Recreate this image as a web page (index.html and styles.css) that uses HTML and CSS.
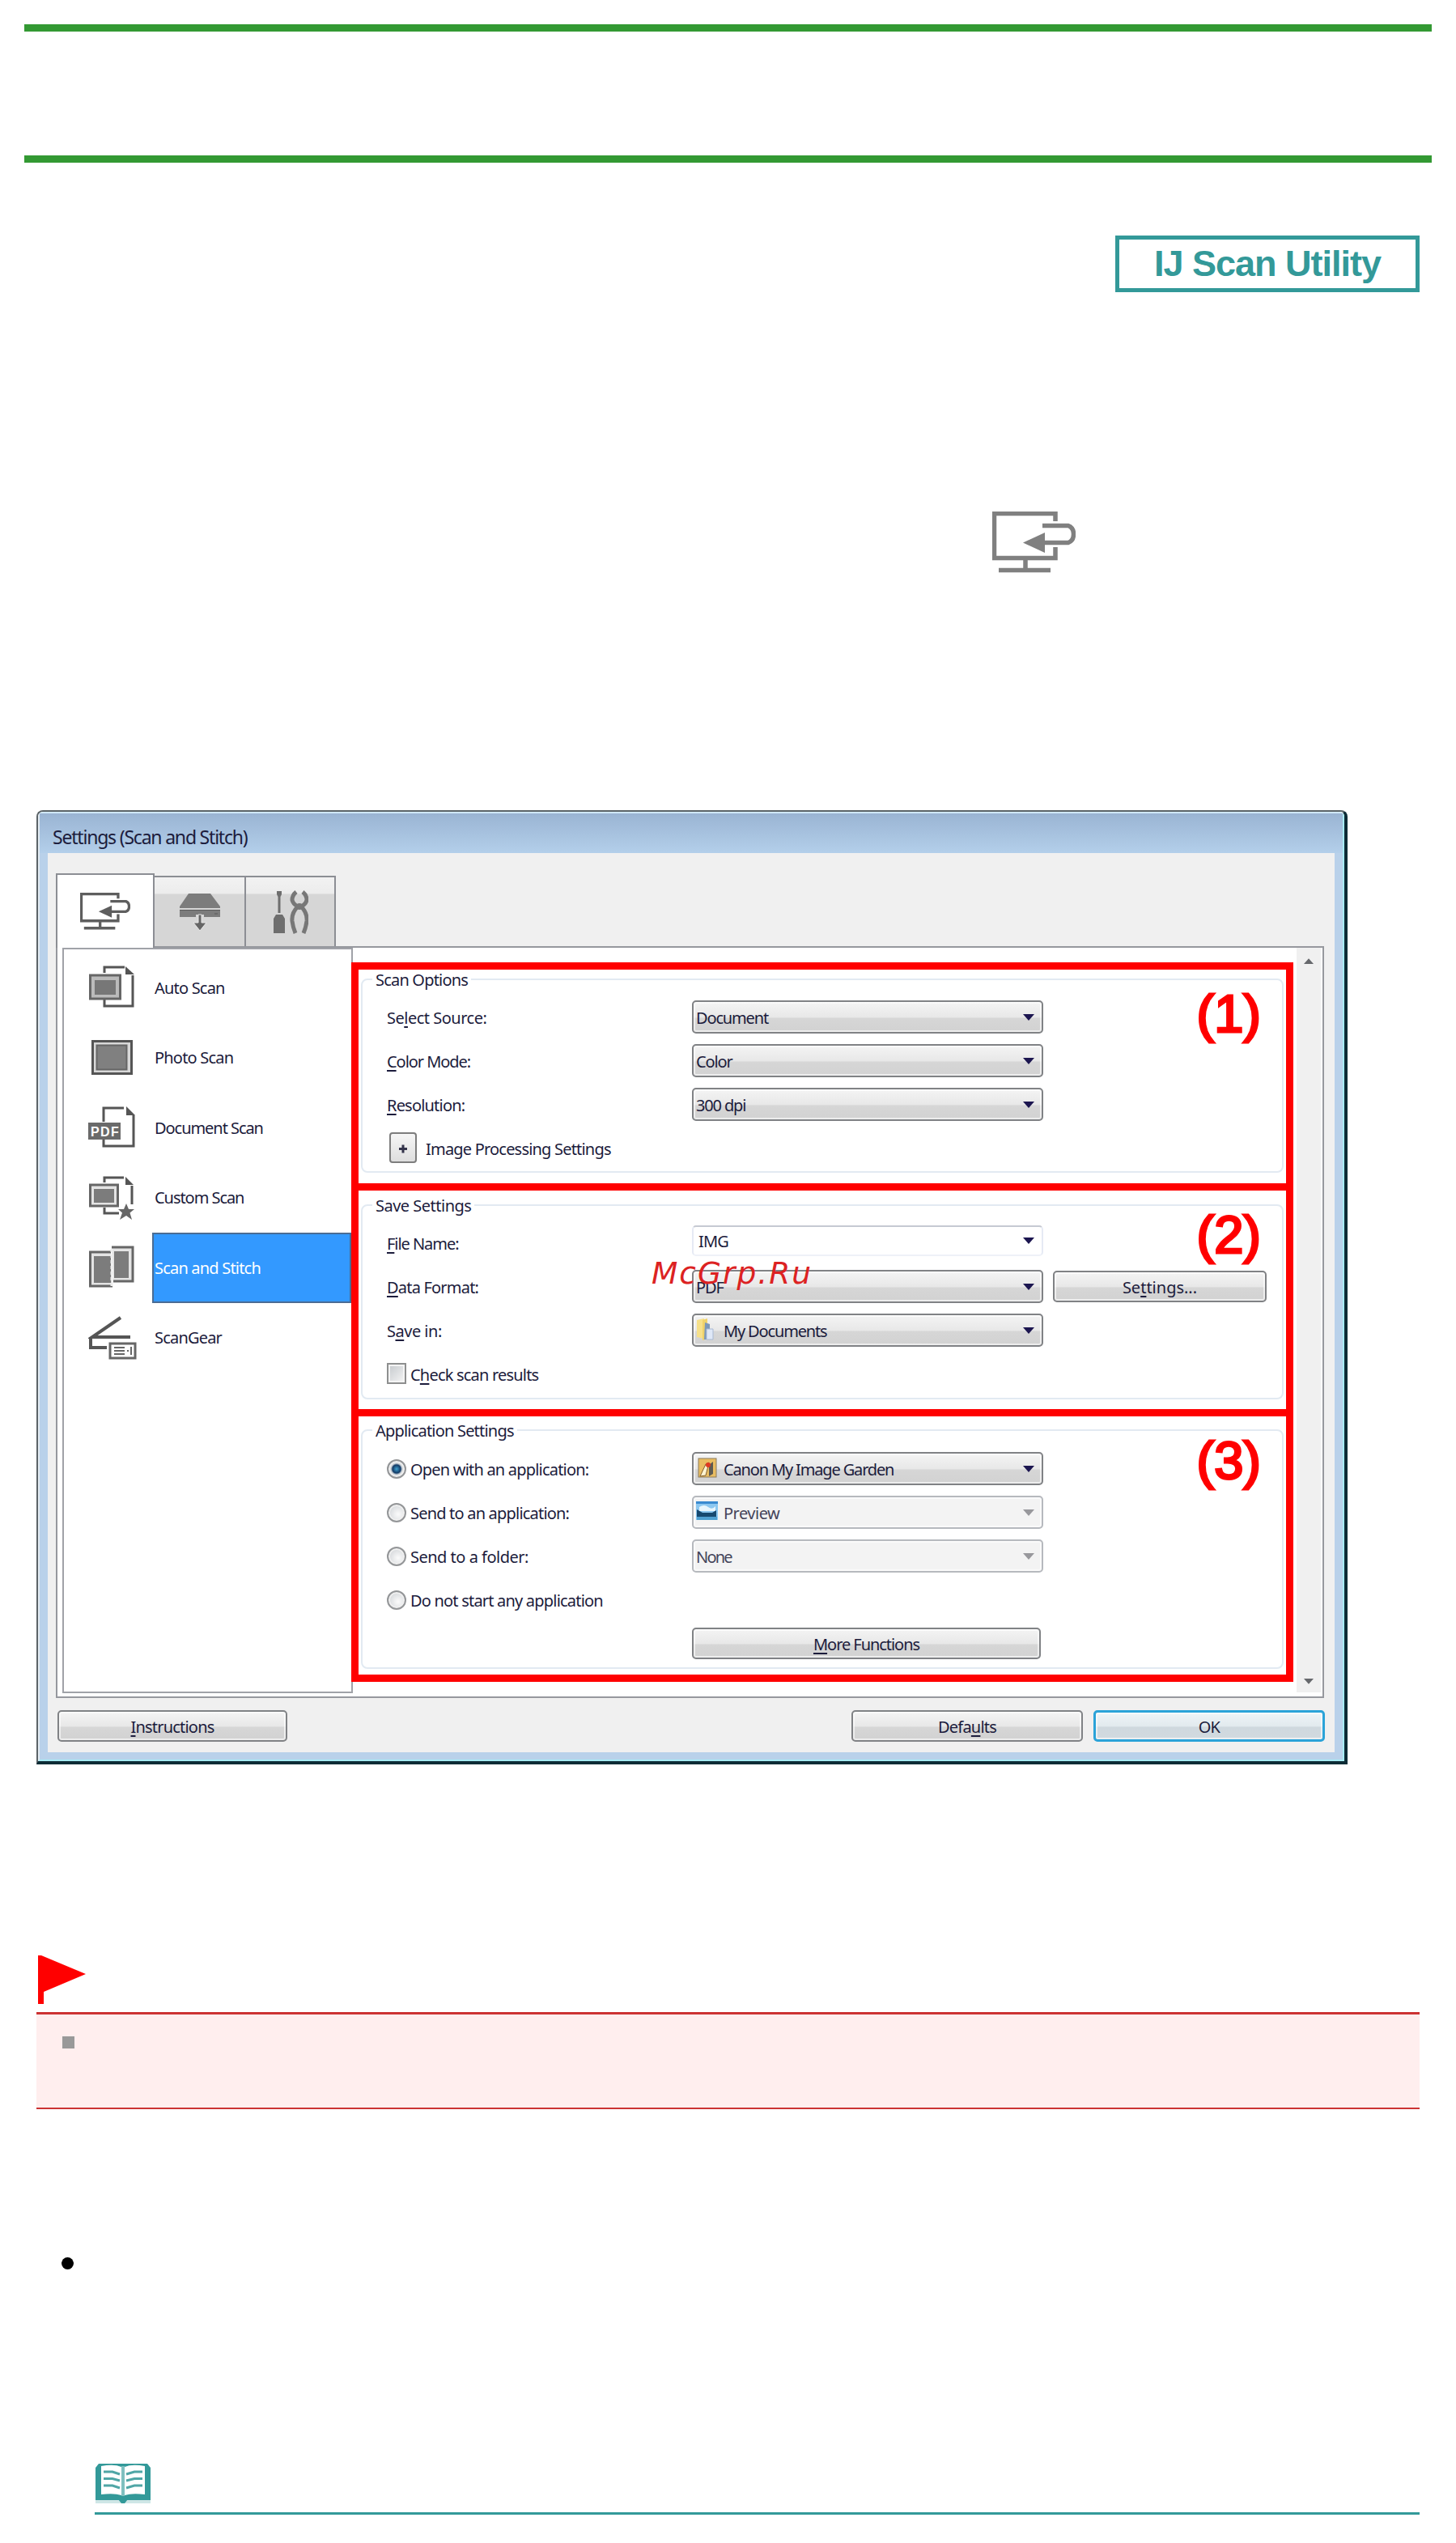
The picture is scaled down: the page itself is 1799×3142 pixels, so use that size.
FILE: index.html
```html
<!DOCTYPE html>
<html lang="en">
<head>
    <meta charset="UTF-8">
    <meta name="viewport" content="width=device-width, initial-scale=1.0">
    <title>Settings (Scan and Stitch)</title>
    <link rel="stylesheet" href="styles.css">
</head>
<body>

    <!-- Shared icon shapes -->
    <svg class="sprite">
        <symbol id="icon-pc" viewBox="0 0 103 76">
            <path d="M78 12V2.5H2.5V57.5H78V44M41 58V72M8 72.5H72" fill="none" stroke="currentColor" stroke-width="5.5"/>
            <path d="M62 17.5H94Q100.5 20 100.5 28T94 38.5H60" fill="none" stroke="currentColor" stroke-width="5.5"/>
            <path d="M38 38.5L65 26V51Z" fill="currentColor"/>
        </symbol>
        <symbol id="icon-caret" viewBox="0 0 14 9">
            <path d="M0 1H14L7 9Z" fill="currentColor"/>
        </symbol>
    </svg>

    <div class="page-title"></div>

    <div class="badge-row">
        <div class="badge"><span>IJ Scan Utility</span></div>
    </div>

    <div class="pc-row">
        <svg class="pc-icon"><use href="#icon-pc"/></svg>
    </div>

    <div class="window">
        <div class="window-frame">
            <div class="title-bar"><span>Settings (Scan and Stitch)</span></div>

            <div class="window-body">
                <div class="tabs">
                    <div class="tab active"><svg class="tab-pc"><use href="#icon-pc"/></svg></div>
                    <div class="tab">
                        <svg width="52" height="46" viewBox="0 0 52 46">
                            <path d="M12 0H39L51 16V18H1V16ZM1 20H51V29H31V26H21V29H1Z" fill="#7c7c7c"/>
                            <path d="M1 20.5H51M44 25H48" stroke="#5a5a5a" fill="none"/>
                            <path d="M24 26H28V36H34L26 46L18 36H24Z" fill="#666" stroke="#e8e8e8" stroke-width="1"/>
                        </svg>
                    </div>
                    <div class="tab last">
                        <svg width="44" height="54" viewBox="0 0 44 54">
                            <path d="M5 1H11V5L9.5 8V28H6.5V8L5 5ZM4 30H12L15 35V53H1V35Z" fill="#6e6e6e"/>
                            <path d="M29 2Q24 6 24 12Q25 17 31 20M37 2Q42 6 42 12Q41 17 35 20M31 20Q23 28 24 38Q25 46 28 53M35 20Q43 28 42 38Q41 46 38 53" fill="none" stroke="#777" stroke-width="5"/>
                            <circle cx="33" cy="20" r="4" fill="#777"/>
                        </svg>
                    </div>
                </div>

                <div class="panel">
                    <div class="sidebar">
                        <div class="side-item">
                            <svg width="58" height="54" viewBox="0 0 58 54">
                                <path d="M19 9V2H44M54 12V50H19V42" fill="none" stroke="#555" stroke-width="3"/>
                                <path d="M45 1L56 11H45Z" fill="#555"/>
                                <rect x="1.5" y="12" width="37" height="29" fill="#bbb" stroke="#666" stroke-width="3"/>
                                <rect x="7" y="18" width="26" height="18" fill="#777"/>
                            </svg>
                            <span>Auto Scan</span>
                        </div>
                        <div class="side-item">
                            <svg width="58" height="54" viewBox="0 0 58 54">
                                <rect x="4.5" y="6.5" width="48" height="40" fill="#d8d8d8" stroke="#555" stroke-width="3"/>
                                <rect x="9.5" y="11.5" width="37" height="30" fill="#808080" stroke="#666" stroke-width="2"/>
                            </svg>
                            <span>Photo Scan</span>
                        </div>
                        <div class="side-item">
                            <svg width="60" height="54" viewBox="0 0 60 54">
                                <path d="M19 20V3H44M56 12V50H19V40" fill="none" stroke="#555" stroke-width="3"/>
                                <path d="M47 1L58 12H47Z" fill="#555"/>
                                <rect y="21" width="40" height="21" fill="#6a6a6a"/>
                                <text x="3" y="38" class="pdf-mark" textLength="34">PDF</text>
                            </svg>
                            <span class="tight">Document Scan</span>
                        </div>
                        <div class="side-item">
                            <svg width="58" height="56" viewBox="0 0 58 56">
                                <path d="M19 9V3H43M53 13V36M19 40V47H37" fill="none" stroke="#555" stroke-width="3"/>
                                <path d="M45 2L55 12H45Z" fill="#555"/>
                                <rect x="1.5" y="12" width="34" height="26" fill="#e4e4e4" stroke="#666" stroke-width="3"/>
                                <rect x="6" y="17" width="25" height="17" fill="#7c7c7c"/>
                                <path d="M46 35L49 42H56L50.5 46.5L53 55L46 50L38 55L41 46.5L36 42H43Z" fill="#666"/>
                            </svg>
                            <span class="tight">Custom Scan</span>
                        </div>
                        <div class="side-item selected">
                            <svg width="58" height="54" viewBox="0 0 58 54">
                                <path d="M28 2H54V44H30" fill="#e4e4e4" stroke="#666" stroke-width="3"/>
                                <rect x="31" y="7" width="18" height="33" fill="#7c7c7c"/>
                                <path d="M27 8H1.500V50H29" fill="#e4e4e4" stroke="#666" stroke-width="3"/>
                                <rect x="6" y="13" width="21" height="33" fill="#7c7c7c"/>
                                <path d="M28 4V50" stroke="#eee" stroke-width="3" stroke-dasharray="4 3"/>
                            </svg>
                            <span>Scan and Stitch</span>
                        </div>
                        <div class="side-item">
                            <svg width="58" height="56" viewBox="0 0 58 56">
                                <path d="M39 3L4 27H51M2 27V40H22" fill="none" stroke="#555" stroke-width="4"/>
                                <rect x="26" y="35" width="31" height="18" fill="#fff" stroke="#666" stroke-width="3"/>
                                <path d="M31 40H44M31 44H44M31 48H44M47 44H49M52 39V49" fill="none" stroke="#666" stroke-width="2"/>
                            </svg>
                            <span>ScanGear</span>
                        </div>
                    </div>

                    <div class="sections">
                        <div class="section scan">
                            <p class="mark">(1)</p>
                            <fieldset>
                                <legend>Scan Options</legend>
                                <div class="row">
                                    <label class="loose">Se<u>l</u>ect Source:</label>
                                    <div class="select"><span>Document</span><svg class="caret"><use href="#icon-caret"/></svg></div>
                                </div>
                                <div class="row">
                                    <label class="tight"><u>C</u>olor Mode:</label>
                                    <div class="select"><span>Color</span><svg class="caret"><use href="#icon-caret"/></svg></div>
                                </div>
                                <div class="row">
                                    <label><u>R</u>esolution:</label>
                                    <div class="select"><span>300 dpi</span><svg class="caret"><use href="#icon-caret"/></svg></div>
                                </div>
                                <div class="row">
                                    <div class="plus"></div>
                                    <span>Image Processing Settings</span>
                                </div>
                            </fieldset>
                        </div>

                        <div class="section save">
                            <p class="mark">(2)</p>
                            <fieldset>
                                <legend class="loose">Save Settings</legend>
                                <div class="row">
                                    <label class="tight"><u>F</u>ile Name:</label>
                                    <div class="select edit"><span>IMG</span><svg class="caret"><use href="#icon-caret"/></svg></div>
                                </div>
                                <div class="row">
                                    <label><u>D</u>ata Format:</label>
                                    <div class="select"><span>PDF</span><svg class="caret"><use href="#icon-caret"/></svg></div>
                                    <div class="button settings"><span>Se<u>t</u>tings...</span></div>
                                    <p class="watermark">McGrp.Ru</p>
                                </div>
                                <div class="row">
                                    <label class="loose">S<u>a</u>ve in:</label>
                                    <div class="select">
                                        <svg width="28" height="30" viewBox="0 0 28 30">
                                            <path d="M1 3L10 1V26L1 24Z" fill="#f6e08a"/>
                                            <path d="M8 3L14 1V26L8 28Z" fill="#efd26a"/>
                                            <path d="M11 6L17 8V14H13V27H10Z" fill="#7d98b8"/>
                                            <path d="M13 14H21V27H13Z" fill="#dfe8f7" stroke="#a9bad4"/>
                                        </svg>
                                        <span>My Documents</span><svg class="caret"><use href="#icon-caret"/></svg>
                                    </div>
                                </div>
                                <div class="row">
                                    <div class="checkbox"></div>
                                    <span>C<u>h</u>eck scan results</span>
                                </div>
                            </fieldset>
                        </div>

                        <div class="section app">
                            <p class="mark">(3)</p>
                            <fieldset>
                                <legend>Application Settings</legend>
                                <div class="row">
                                    <div class="radio on"></div>
                                    <label>Open with an application:</label>
                                    <div class="select">
                                        <svg width="28" height="26" viewBox="0 0 28 26">
                                            <rect x="3" y="1" width="22" height="23" fill="#e9bd62" stroke="#8a7a5c"/>
                                            <path d="M5 23L12 8L16 6L12 22Z" fill="#fff3cf" stroke="#83602c"/>
                                            <path d="M16 9L21 5V20L16 23Z" fill="#5d5a52"/>
                                            <circle cx="15" cy="9" r="3" fill="#e03a22"/>
                                        </svg>
                                        <span>Canon My Image Garden</span><svg class="caret"><use href="#icon-caret"/></svg>
                                    </div>
                                </div>
                                <div class="row">
                                    <div class="radio"></div>
                                    <label>Send to an application:</label>
                                    <div class="select off">
                                        <svg width="28" height="30" viewBox="0 0 28 30">
                                            <rect y="2" width="27" height="23" fill="#8cc7f0"/>
                                            <path d="M0 2H27V5H0Z" fill="#3a8ad0"/>
                                            <path d="M4 9Q10 5 15 9T24 8V14H4Z" fill="#e9f6fd"/>
                                            <path d="M1 12L8 16H20L25 13V24H1Z" fill="#17496f"/>
                                            <path d="M1 21H26V25H1Z" fill="#4f9fd0"/>
                                        </svg>
                                        <span class="loose">Preview</span><svg class="caret"><use href="#icon-caret"/></svg>
                                    </div>
                                </div>
                                <div class="row">
                                    <div class="radio"></div>
                                    <label class="loose">Send to a folder:</label>
                                    <div class="select off"><span class="tighter">None</span><svg class="caret"><use href="#icon-caret"/></svg></div>
                                </div>
                                <div class="row">
                                    <div class="radio"></div>
                                    <label>Do not start any application</label>
                                </div>
                                <div class="row">
                                    <div class="button more"><span class="tight"><u>M</u>ore Functions</span></div>
                                </div>
                            </fieldset>
                        </div>
                    </div>

                    <div class="scrollbar">
                        <svg class="caret up"><use href="#icon-caret"/></svg>
                        <svg class="caret"><use href="#icon-caret"/></svg>
                    </div>
                </div>

                <div class="footer">
                    <div class="button instructions"><span><u>I</u>nstructions</span></div>
                    <div class="button"><span>Defa<u>u</u>lts</span></div>
                    <div class="button default"><span>OK</span></div>
                </div>
            </div>
        </div>
    </div>

    <div class="important">
        <svg width="62" height="62" viewBox="0 0 62 62">
            <path d="M2 61V1H6L61 24L9 46V61Z" fill="#f00"/>
        </svg>
        <div class="important-box"><div class="square"></div></div>
    </div>

    <div class="bullet"></div>

    <div class="note">
        <svg width="70" height="49" viewBox="0 0 70 49">
            <path d="M5 0H65L69 5V45H1V5Z" fill="#399"/>
            <path d="M1 45H69V49H1Z" fill="#cfe6e6"/>
            <path d="M8 3Q24 0 33 4V39Q24 36 8 38Z" fill="#fff"/>
            <path d="M62 3Q46 0 37 4V39Q46 36 62 38Z" fill="#fff"/>
            <path d="M11 10H22L31 13M11 18.5H22L31 21M11 27H22L31 30M59 10H49L39 13M59 18.5H49L39 21M59 27H49L39 30" fill="none" stroke="#4fa6a6" stroke-width="3"/>
            <path d="M35 3V40" stroke="#7fc0c0" stroke-width="4"/>
            <path d="M29 44H41L37 49H33Z" fill="#399"/>
        </svg>
    </div>

</body>
</html>
```
FILE: styles.css
```css
*,
*::before,
*::after {
    box-sizing: border-box;
}

body {
    margin: 0;
    padding: 30px 45px 0;
    height: 3142px;
    overflow: hidden;
    background-color: white;
    font-family: "Noto Sans", sans-serif;
    font-size: 20px;
    line-height: 24px;
    letter-spacing: -0.8px;
    color: #1c1c3c;
}

p {
    margin: 0;
}

u {
    text-underline-offset: 3px;
    text-decoration-thickness: 2px;
}

.sprite {
    position: absolute;
    width: 0;
    height: 0;
}

.page-title {
    height: 171px;
    margin: 0 -15px;
    border-top: 9px solid #393;
    border-bottom: 9px solid #393;
}

.badge-row {
    display: flex;
    justify-content: flex-end;
    margin-top: 90px;
}

.badge {
    width: 376px;
    height: 70px;
    border: 5px solid #399;
    color: #399;
    font: bold 45px/60px "Liberation Sans", sans-serif;
    letter-spacing: -1px;
    text-align: center;
}

.pc-row {
    height: 369px;
    margin-top: 271px;
    padding-left: 1181px;
    color: #808080;
}

.pc-icon {
    display: block;
    width: 103px;
    height: 76px;
}

/* Window chrome */
.window {
    width: 1620px;
    height: 1179px;
    border: 2px solid #5c6468;
    border-right: 4px solid #0d2c36;
    border-bottom: 4px solid #0d2c36;
    border-radius: 8px 8px 0 0;
}

.window-frame {
    height: 100%;
    border: 2px solid #a8ecf4;
    border-top-color: #cfe8f6;
    border-left-color: #e3ecf3;
    border-radius: 6px 6px 0 0;
    background-color: #b9d1ea;
}

.title-bar {
    height: 49px;
    padding: 17px 0 0 16px;
    background: linear-gradient(#9ab4d3, #b3cfea);
    font-size: 23px;
    letter-spacing: -1.2px;
}

.window-body {
    height: 1111px;
    margin: 0 10px;
    padding: 25px 12px 0 10px;
    background-color: #f0f0f0;
}

.tabs {
    display: flex;
    align-items: flex-end;
    height: 90px;
}

.tab {
    display: flex;
    align-items: center;
    justify-content: center;
    width: 113px;
    height: 87px;
    border: 2px solid #8c8e94;
    border-left-width: 0;
    border-bottom: 0;
    background: linear-gradient(#f2f2f2, #ececec 20px, #d6d6d6 21px);
}

.tab.last {
    width: 111px;
}

.tab.active {
    z-index: 1;
    width: 122px;
    height: 92px;
    margin-bottom: -2px;
    border-left-width: 2px;
    background: white;
    color: #5e5e5e;
}

.tab-pc {
    width: 62px;
    height: 46px;
}

.panel {
    display: flex;
    width: 1567px;
    height: 929px;
    border: 2px solid #96989e;
    background-color: white;
}

.sidebar {
    width: 359px;
    height: 921px;
    margin-left: 6px;
    padding-top: 4px;
    border: 2px solid #a0a2a8;
}

.side-item {
    display: flex;
    align-items: center;
    height: 86.5px;
    padding-left: 30px;
}

.side-item svg {
    flex: none;
    width: 60px;
}

.side-item span {
    flex: 1;
    margin-left: 19px;
    padding-left: 3px;
    line-height: 83px;
}

.side-item.selected span {
    background-color: #3399ff;
    border: 2px solid #4a6c94;
    padding-left: 1px;
    color: white;
}

.pdf-mark {
    fill: white;
    font: bold 16px "Liberation Sans", sans-serif;
}

/* Numbered sections */
.sections {
    width: 1164px;
    height: 889px;
    margin: 18px 0 0 -2px;
    border-top: 9px solid red;
    z-index: 1;
}

.section {
    position: relative;
    padding: 0 3px;
    border: 9px solid red;
    border-top: 0;
    background-color: white;
}

.section.scan { height: 273px; }
.section.save { height: 279px; padding-top: 6px; }
.section.app { height: 328px; padding-top: 5px; }

fieldset {
    width: 1140px;
    height: 251px;
    margin: 0;
    padding: 7px 0 0 30px;
    border: 2px solid #e2eaf2;
    border-radius: 8px;
}

.save fieldset { height: 252px; }
.app fieldset { height: 307px; padding-top: 8px; }

legend {
    height: 24px;
    margin-left: -18px;
    padding: 0 4px;
    line-height: 26px;
}

.mark {
    position: absolute;
    top: 17px;
    right: 31px;
    color: red;
    font: 65px/76px "Liberation Sans", sans-serif;
    letter-spacing: 0;
    -webkit-text-stroke: 3px red;
}

.row {
    position: relative;
    display: flex;
    align-items: center;
    height: 54px;
}

.row label,
.row span,
.button span {
    padding-top: 3px;
}

.row label:first-child {
    width: 377px;
}

.select,
.button {
    display: flex;
    align-items: center;
    height: 41px;
    border: 2px solid #808285;
    border-radius: 5px;
    background: linear-gradient(#f4f4f4, #e8e8e8 50%, #d6d6d6 55%, #d2d2d2);
    box-shadow: inset 0 0 0 2px rgba(255, 255, 255, 0.6);
}

.select {
    width: 434px;
    padding: 0 9px 0 3px;
    letter-spacing: -1.15px;
}

.select svg + span {
    margin-left: 6px;
}

.caret {
    width: 14px;
    height: 9px;
    margin-left: auto;
    color: #1c1650;
}

.select.edit {
    height: 38px;
    margin-bottom: 4px;
    padding-left: 6px;
    padding-bottom: 2px;
    background: white;
    border-color: #c6cad2 #e6eaf4 #eef1f8;
    letter-spacing: -0.8px;
}

.select.off {
    background: #f3f3f3;
    border-color: #b6b9be;
    color: #44445a;
}

.off .caret {
    color: #98989c;
}

.button {
    justify-content: center;
    height: 39px;
}

.settings {
    width: 264px;
    margin-left: 12px;
    letter-spacing: 0;
}

.more {
    width: 431px;
    margin-left: 377px;
}

.loose { letter-spacing: -0.5px; }
.tight { letter-spacing: -1.05px; }
.tighter { letter-spacing: -1.8px; }

.plus {
    position: relative;
    width: 34px;
    height: 38px;
    margin: 0 11px 0 3px;
    border: 2px solid #7d7d7d;
    border-radius: 4px;
    background: linear-gradient(#f6f6f6, #dedede);
}

.plus::before,
.plus::after {
    content: "";
    position: absolute;
    top: 17px;
    left: 10px;
    width: 10px;
    height: 3px;
    background-color: #33334a;
}

.plus::after {
    transform: rotate(90deg);
}

.checkbox {
    width: 24px;
    height: 26px;
    margin-right: 5px;
    border: 2px solid #8e8f8f;
    background: linear-gradient(135deg, #c4c8cc, #f6f6f6);
    box-shadow: inset 0 0 0 2px #f4f4f4;
}

.radio {
    width: 24px;
    height: 24px;
    margin: 2px 5px 0 0;
    border: 2px solid #949698;
    border-radius: 50%;
    background: radial-gradient(circle at 60% 60%, #fbfbfb, #c8ccd0);
    box-shadow: inset 0 0 0 2px #f0f0f0;
}

.radio.on {
    background: radial-gradient(circle, #3fa0d0 0, #123a66 5px, #d4d8dc 7px);
}

.radio + label {
    width: 348px;
}

.watermark {
    position: absolute;
    left: 327px;
    top: -13px;
    color: #dc2222;
    font: italic 37.5px/48px "DejaVu Sans", sans-serif;
    letter-spacing: 2px;
}

.scrollbar {
    display: flex;
    flex-direction: column;
    justify-content: space-between;
    align-items: center;
    width: 30px;
    height: 920px;
    margin-left: 4px;
    padding: 13px 0 10px;
    background-color: #f0f0f0;
}

.scrollbar .caret {
    width: 12px;
    height: 8px;
    margin: 0;
    color: #66686c;
}

.scrollbar .up {
    transform: rotate(180deg);
}

.footer {
    display: flex;
    gap: 13px;
    margin: 15px 0 0 2px;
}

.footer .button {
    width: 286px;
}

.footer .instructions {
    width: 284px;
    margin-right: auto;
}

.footer .default {
    border: 3px solid #2ba3d8;
    background: linear-gradient(#eef4f7, #e2eaee 50%, #cfd8de 55%, #d2dadf);
}

/* Notes under the window */
.important {
    margin: 235px 0 0;
    width: 1709px;
}

.important svg {
    display: block;
}

.important-box {
    height: 120px;
    margin-top: 9px;
    padding: 27px 0 0 32px;
    border-top: 3px solid #c33;
    border-bottom: 2px solid #c33;
    background-color: #fee;
}

.square {
    width: 15px;
    height: 15px;
    background-color: #999;
}

.bullet {
    width: 15px;
    height: 15px;
    margin: 183px 0 0 31px;
    border-radius: 50%;
    background-color: black;
}

.note {
    width: 1637px;
    height: 63px;
    margin: 240px 0 0 72px;
    border-bottom: 3px solid #399;
}
```
